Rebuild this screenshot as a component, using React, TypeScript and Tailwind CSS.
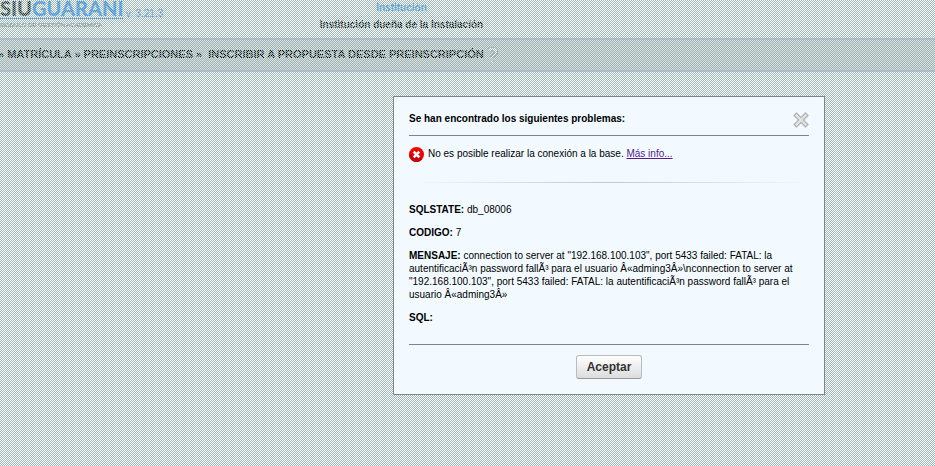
import type { ReactNode } from "react";

const crumbs = ["MATRÍCULA", "PREINSCRIPCIONES", " INSCRIBIR A PROPUESTA DESDE PREINSCRIPCIÓN"];

const details = [
  { label: "SQLSTATE:", value: "db_08006" },
  { label: "CODIGO:", value: "7" },
  {
    label: "MENSAJE:",
    value:
      'connection to server at "192.168.100.103", port 5433 failed: FATAL: la autentificaciÃ³n password fallÃ³ para el usuario Â«adming3Â»\\nconnection to server at "192.168.100.103", port 5433 failed: FATAL: la autentificaciÃ³n password fallÃ³ para el usuario Â«adming3Â»',
  },
  { label: "SQL:", value: "" },
];

function Logo() {
  return (
    <div className="shrink-0 font-['Lato',sans-serif]">
      <div className="border-b border-[#3399ff] pb-0.5 text-[20px] font-black leading-4">
        <span className="text-[#333]">SIU</span>
        <span className="text-[#3399ff]">GUARANI</span>
      </div>
      <p className="mt-[2px] whitespace-nowrap font-['Liberation_Sans',sans-serif] text-[6px] leading-2 text-[#666]">
        MÓDULO DE GESTIÓN ACADÉMICA
      </p>
    </div>
  );
}

function Header() {
  return (
    <header className="grid h-[38px] grid-cols-[1fr_auto_1fr] items-start">
      <div className="flex">
        <Logo />
        <span className="ml-0.5 mt-2 text-[10px] leading-3 text-[#3399ff]">v. 3.21.3</span>
      </div>
      <div className="-ml-33 text-center text-[10px] font-bold leading-[17px]">
        <p className="-mt-px text-[#3399ff]">Institución</p>
        <p className="text-black">Institución dueña de la Instalación</p>
      </div>
    </header>
  );
}

function HelpIcon() {
  return (
    <svg className="mt-1 h-[18px] w-3" viewBox="0 0 12 18" fill="none">
      <path d="M2 4L4 2H7L9 4V6L5 10V11M5 14.5v1" stroke="#999" strokeWidth="4" />
      <path d="M2 4L4 2H7L9 4V6L5 10V11M5 14v2" stroke="#fff" strokeWidth="2.4" />
    </svg>
  );
}

function Breadcrumb() {
  return (
    <nav className="flex h-[34px] items-center border-y-2 border-[#c0c4dc] bg-[#dedede] pb-0.5 text-[11px] font-bold text-black">
      <p className="-ml-0.5">
        {crumbs.map((crumb) => (
          <span key={crumb} className="whitespace-pre">
            {"» " + crumb + " "}
          </span>
        ))}
      </p>
      <HelpIcon />
    </nav>
  );
}

function ErrorIcon() {
  return (
    <svg className="size-[15px] shrink-0" viewBox="0 0 15 15">
      <circle cx="7.5" cy="7.5" r="7.5" fill="#f40000" />
      <path d="M0 8A7.5 7.5 0 0 0 13 12.5L9 7Z" fill="#c8000a" />
      <path d="M4.7 4.7l5.6 5.6M10.3 4.7l-5.6 5.6" stroke="#fff" strokeWidth="2.6" />
    </svg>
  );
}

function CloseIcon() {
  return (
    <svg className="size-4" viewBox="0 0 16 16" strokeLinecap="square">
      <path d="M3.5 3.5l9 9M12.5 3.5l-9 9" stroke="#c4c8ca" strokeWidth="5" />
      <path d="M3.5 3.5l9 9M12.5 3.5l-9 9" stroke="#a4a8aa" strokeWidth="3.8" />
      <path d="M3.5 3.5l9 9M12.5 3.5l-9 9" stroke="#e4e4e2" strokeWidth="2.4" />
    </svg>
  );
}

function Overlay({ children }: { children: ReactNode }) {
  return (
    <div className="fixed inset-0 bg-[conic-gradient(#9ab6b6_25%,transparent_0_50%,#9ab6b6_0_75%,transparent_0)] bg-[length:2px_2px] pt-24">
      {children}
    </div>
  );
}

function ErrorDialog() {
  return (
    <section
      role="dialog"
      aria-labelledby="dialog-title"
      className="mr-[110px] ml-auto w-108 border border-[#808488] bg-[#f2faff] px-[15px] pb-[15px] pt-[14px] text-[10px] leading-[13px] text-black"
    >
      <div className="flex h-[25px] items-start justify-between border-b border-[#808488]">
        <h1 id="dialog-title" className="mt-px font-bold">
          Se han encontrado los siguientes problemas:
        </h1>
        <button type="button" aria-label="Cerrar" className="mt-px">
          <CloseIcon />
        </button>
      </div>
      <div className="mt-[11px] flex gap-1">
        <ErrorIcon />
        <p>
          No es posible realizar la conexión a la base.{" "}
          <a href="#detalle" className="text-[#551a8b] underline">
            Más info...
          </a>
        </p>
      </div>
      <div className="mt-5 h-px bg-linear-to-r from-transparent via-[#c4c8ca] to-transparent" />
      <div id="detalle" className="mt-5 space-y-[10px]">
        {details.map((item) => (
          <p key={item.label}>
            <strong>{item.label}</strong> {item.value}
          </p>
        ))}
      </div>
      <div className="mt-5 border-t border-[#808488] pt-[10px] text-center">
        <button
          type="button"
          className="h-6 w-[66px] rounded-[3px] border border-[#bbb] border-b-[#999] bg-linear-to-b from-white to-[#dcdcdc] text-xs font-bold text-[#333]"
        >
          Aceptar
        </button>
      </div>
    </section>
  );
}

export default function App() {
  return (
    <div className="min-h-screen bg-white font-['Liberation_Sans',Arial,sans-serif]">
      <Header />
      <Breadcrumb />
      <Overlay>
        <ErrorDialog />
      </Overlay>
    </div>
  );
}
